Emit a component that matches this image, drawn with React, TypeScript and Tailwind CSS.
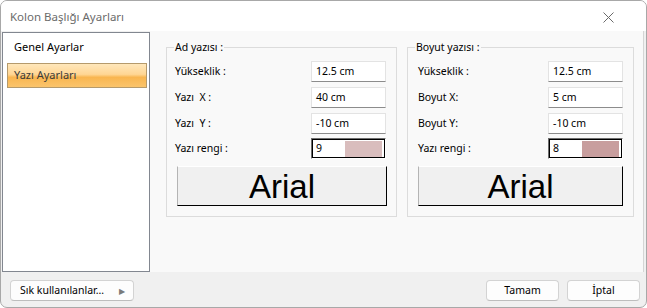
const ui = { fontFamily: '"Noto Sans", "Open Sans", sans-serif' };

type Row = { label: string; value: string };

function Field({ label, value }: Row) {
  return (
    <div className="flex items-center h-[21px]">
      <span className="text-[10.5px] text-black whitespace-pre">{label}</span>
      <div className="ml-auto w-[75px] h-[21px] bg-white border border-[#e3e3e3] border-b-[#8c8c8c] flex items-center pl-[4px] text-[10.5px] text-black">
        {value}
      </div>
    </div>
  );
}

function ColorField({ num, swatch }: { num: string; swatch: string }) {
  return (
    <div className="flex items-center h-[21px]">
      <span className="text-[10.5px] text-black">Yazı rengi :</span>
      <div className="ml-auto w-[75px] h-[21px] border-t border-l border-[#6d6d6d] border-r border-r-white border-b border-b-white">
        <div className="h-full border border-black bg-white flex items-center">
          <span className="pl-[3px] w-[32px] text-[10.5px] text-black">{num}</span>
          <div className="flex-1 h-[16px] mr-[2px]" style={{ backgroundColor: swatch }} />
        </div>
      </div>
    </div>
  );
}

function FontButton({ width }: { width: string }) {
  return (
    <div
      className={`${width} h-[40px] bg-[#f0f0f0] border-l border-t border-l-[#b4b4b4] border-t-white border-r border-b border-r-black border-b-black flex items-center justify-center text-[33px] leading-none text-black`}
      style={{ fontFamily: '"Liberation Sans", Arial, sans-serif' }}
    >
      Arial
    </div>
  );
}

function Group({
  title,
  rows,
  num,
  swatch,
  className,
  btnWidth,
  btnOffset,
}: {
  title: string;
  rows: Row[];
  num: string;
  swatch: string;
  className: string;
  btnWidth: string;
  btnOffset: string;
}) {
  return (
    <div className={`relative h-[170px] border border-[#dcdcdc] pt-[13px] pr-[10px] ${className}`}>
      <span className="absolute -top-[8px] left-[7px] bg-[#f9f9f9] px-[1px] text-[10.5px] leading-[14px] text-black">
        {title}
      </span>
      <div className="flex flex-col gap-[5px]">
        {rows.map((r) => (
          <Field key={r.label} {...r} />
        ))}
      </div>
      <div className="mt-[4px]">
        <ColorField num={num} swatch={swatch} />
      </div>
      <div className={`mt-[7px] ${btnOffset}`}>
        <FontButton width={btnWidth} />
      </div>
    </div>
  );
}

function FooterButton({ children, className }: { children: React.ReactNode; className: string }) {
  return (
    <div
      className={`h-[21px] rounded-[4px] border border-[#d3d3d3] border-b-[#bdbdbd] bg-[#fdfdfd] flex items-center text-[10.5px] text-black ${className}`}
    >
      {children}
    </div>
  );
}

export default function App() {
  return (
    <div
      className="w-[647px] h-[308px] rounded-[7px] border border-[#a8a8a8] bg-[#f0f0f0] overflow-hidden flex flex-col"
      style={ui}
    >
      {/* title bar */}
      <div className="h-[30px] bg-white flex items-center pl-[9px] pr-[32px] pt-[2px] shrink-0">
        <span className="text-[11.5px] text-[#6b6b6b]">Kolon Başlığı Ayarları</span>
        <svg className="ml-auto" width="11" height="11" viewBox="0 0 11 11">
          <path d="M0.5 0.5 L10.5 10.5 M10.5 0.5 L0.5 10.5" stroke="#6a6a6a" strokeWidth="1" />
        </svg>
      </div>

      {/* body */}
      <div className="h-[241px] flex pl-[1px] pr-[2px] shrink-0">
        <div className="w-[148px] h-[240px] mt-[1px] bg-white border border-[#828790] flex flex-col">
          <div className="h-[24px] mt-[2px] flex items-center pl-[11px] text-[11px] text-black">
            Genel Ayarlar
          </div>
          <div className="h-[25px] mt-[4px] ml-[4px] mr-[2px] border border-[#b59a6c] bg-[linear-gradient(180deg,#ffe7bb_0%,#ffd694_45%,#f9b650_58%,#fbc46c_100%)] flex items-center pl-[6px] text-[11px] text-[#3a3a3a]">
            Yazı Ayarları
          </div>
        </div>
        <div className="flex-1 bg-[#f9f9f9] border-r border-[#d5d5d5] flex pt-[16px] pl-[16px] gap-[10px]">
          <Group
            title="Ad yazısı :"
            rows={[
              { label: "Yükseklik :", value: "12.5 cm" },
              { label: "Yazı  X :", value: "40 cm" },
              { label: "Yazı  Y :", value: "-10 cm" },
            ]}
            num="9"
            swatch="#d9bdbd"
            className="w-[231px] pl-[8px]"
            btnWidth="w-[210px]"
            btnOffset="ml-[2px] -mr-[1px]"
          />
          <Group
            title="Boyut yazısı :"
            rows={[
              { label: "Yükseklik :", value: "12.5 cm" },
              { label: "Boyut X:", value: "5 cm" },
              { label: "Boyut Y:", value: "-10 cm" },
            ]}
            num="8"
            swatch="#c89e9e"
            className="w-[227px] pl-[10px]"
            btnWidth="w-[205px]"
            btnOffset=""
          />
        </div>
      </div>

      {/* footer */}
      <div className="flex-1 flex items-start pt-[8px] pl-[9px] pr-[6px]">
        <FooterButton className="w-[124px] pl-[9px] pr-[8px]">
          <span>Sık kullanılanlar…</span>
          <span className="ml-auto text-[8px] text-[#7a7a7a]">▶</span>
        </FooterButton>
        <FooterButton className="ml-auto w-[73px] justify-center">Tamam</FooterButton>
        <FooterButton className="ml-[8px] w-[73px] justify-center">İptal</FooterButton>
      </div>
    </div>
  );
}
